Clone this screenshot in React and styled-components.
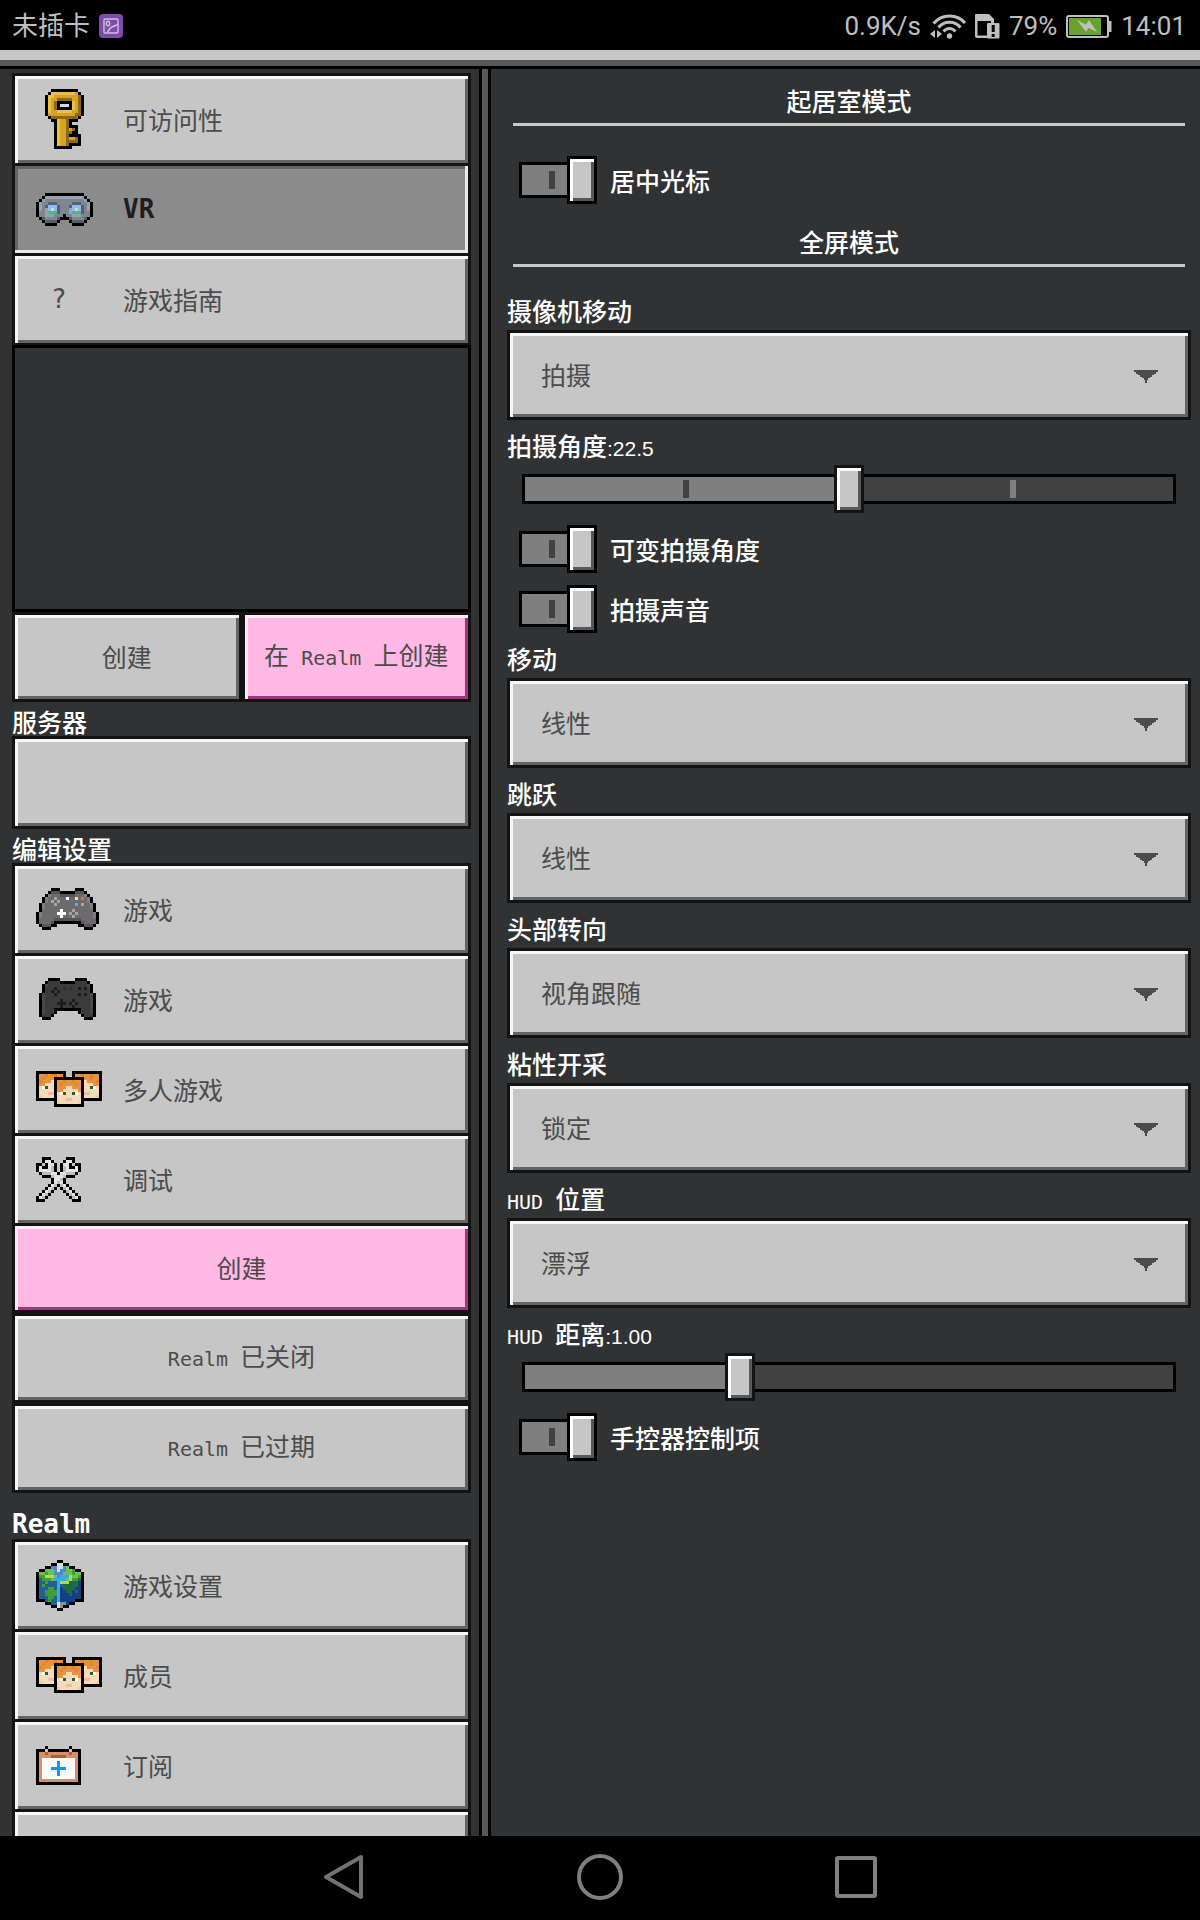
import React, { useState } from 'react';
import styled, { createGlobalStyle, css } from 'styled-components';

const GlobalStyle = createGlobalStyle`
  *, *::before, *::after { box-sizing: border-box; }
  body {
    margin: 0;
    background: #000;
    font-family: "Noto Sans CJK SC", "Noto Sans", sans-serif;
    font-size: 25px;
    line-height: 27px;
    color: #fff;
  }
  button, select, input { font: inherit; margin: 0; border-radius: 0; }
`;

/* ---------- pixel art ---------- */

const PALETTE = {
  key: { K: '#000', L: '#ecbf45', G: '#d5a326', D: '#8c6714', W: '#d8d8d8' },
  vr: { K: '#000', B: '#97a2ad', G: '#7d8792', D: '#56606b', C: '#8dbcf5', Y: '#cfe89a', T: '#55b48c' },
  pad: { K: '#000', G: '#6d6a6d', M: '#7f7d7f', D: '#565456', L: '#a5a5a5', W: '#fff', Y: '#f0e68a', R: '#e8616c', B: '#57aee0', E: '#93b877' },
  dark: { K: '#000', G: '#3b3b3b', M: '#484848', D: '#1c1c1c', S: '#303030' },
  faces: { K: '#000', O: '#e8923c', Q: '#dd8530', S: '#f4dcba', T: '#ecd0a6', W: '#fff', G: '#236224', P: '#f0b9ac' },
  tools: { K: '#000', W: '#e4e4e4', L: '#bcbcbc' },
  globe: { K: '#000', W: '#cfe3e6', B: '#4f86d8', C: '#3aa9ec', G: '#3f9e35', L: '#6cc24a', P: '#9fdc6c', U: '#235f94', N: '#123f86', D: '#1d6a44', S: '#8f8f8f' },
  calendar: { K: '#000', O: '#d3906a', D: '#a5633c', W: '#fbfbfb', B: '#1e90f5', S: '#c6c6c6' },
};

const SPRITES = {
  key: [
    '.....KKKKKKKKK',
    '....KLLLLLLLLGK',
    '...KLLGGGGGGGGDK',
    '...KLGGDDDDDGGDK',
    '...KLGDKKKKKLGDK',
    '...KLGDKWWWKLGDK',
    '...KLGDKKKKKLGDK',
    '...KLGGLLLLLGGDK',
    '...KGGGGGGGGGDDK',
    '....KDDDDDDDDDK',
    '.....KKLGGDKKK',
    '......KLGGDK',
    '......KLGGDKKK',
    '......KLGGDGDK',
    '......KLGGDDKK',
    '......KLGGDKKKK',
    '......KLGGDGGDK',
    '......KLGGDDDDK',
    '......KLGGDKKKK',
    '......KKKKKK',
  ],
  vr: [
    '...KKKKKKKKKKKKK',
    '..KBBBBBBBBBBBBBK',
    '.KBGGGGGGGGGGGGGBK',
    'KBGGDDDGGGGGDDDGGBK',
    'KBGDCCCDGGGDCCCDGBK',
    'KBGBCYCDGGGBCYCDGBK',
    'KGGBTTTDGGGBTTTDGGK',
    'KGGBBBGGGKGGBBBGGGK',
    '.KDGGGGDKKKDGGGGDK',
    '..KDDDDK...KDDDDK',
    '...KKKK.....KKKK',
  ],
  pad: [
    '.....KKK.....KKK',
    '....KDDDKKKKKDDDK',
    '...KMGGGDDDDDGGGMK',
    '..KMGGLGGGWGGYGRGMK',
    '..KMGLGLGGGGGGGGGMK',
    '.KMGGGLGGGGGGBGEGGMK',
    '.KMGGGGGGGGGGGGGGGMK',
    '.KGGGGGGWGGGLGGGGGGK',
    'KMGGGGGWWWGLGLGGGGGMK',
    'KMGGGGGGWGGGLGGGGGGMK',
    'KGGGGGDDDDDDDDDGGGGGK',
    'KGGGGDKKKKKKKKKDGGGGK',
    '.KDDDKK.......KKDDDK',
    '..KKK...........KKK',
  ],
  dark: [
    '....KKKK.....KKKK',
    '...KGGGGKKKKKGGGGK',
    '..KMGGGGGGGGGGGGGMK',
    '..KGGGDGGSGSGGDGDGK',
    '..KGGDGDGGGGGGGGGGK',
    '.KMGGGDGGGGGGGDGDGMK',
    '.KMGGGGGGGGGGGGGGGMK',
    '.KMGGGGGDGGGDGGGGGMK',
    '.KMGGGGDDDGDGDGGGGMK',
    '.KMGGGGGDGGGDGGGGGMK',
    '.KMGGGKKKKKKKKKGGGMK',
    '.KMGGGK.......KGGGMK',
    '.KGGGK.........KGGGK',
    '..KKK...........KKK',
  ],
  faces: [
    'KKKKKKKKKK..KKKKKKKKKK',
    'KOOQOOQOOK..KOOQOOQOOK',
    'KOQOOOKKKKKKKKKKOOQOOK',
    'KQOOOSKOOQOOQOOKSOOOQK',
    'KOOSSSKOQOOOOQOKSSSOOK',
    'KSWGSSKOOOSSOOOKSSGWSK',
    'KSSSSSKOOSSSSSOKSSSSSK',
    'KSSSPPKSWGSSGWSKPPSSSK',
    'KTSSSSKSSSSSSSSKSSSSTK',
    'KKKKKKKSSSPPSSSKKKKKKK',
    '......KTSSSSSSTK',
    '......KKKKKKKKKK',
  ],
  tools: [
    '..KKK.....KKK',
    '..KWWK...KWWK',
    'KK.KWWK.KWWK.KK',
    'KWKKWLK.KLWKKWK',
    'KWWWWLK.KLWWWWK',
    '.KLLLWWKWWLLLK',
    '..KKKLWWWLKKK',
    '.....KWWLK',
    '.....KWLWK',
    '....KWLKLWK',
    '...KWLK.KLWK',
    '..KWLK...KLWK',
    '.KWLK.....KLWK',
    'KWLK.......KLWK',
    'KKK.........KKK',
  ],
  globe: [
    '.......KK',
    '.....KKWWKK',
    '...KKBBWWBLKK',
    '.KKLLLBWBBLLGKK',
    'KLLGLLBBBLLLGLLK',
    'KGGPPPLBCCCPLLGK',
    'KUGGGLCCCCLPGGDK',
    'KUUGUUUCPPPDDDNK',
    'KUGUUUUCUDDDDDNK',
    'KUUUGGUCNDDDDNNK',
    'KUUGGGGCNNDDNDNK',
    'KUUGGGGCNNNDNNNK',
    'KUUUGGUCNNNNNNNK',
    'KKKUGUUCNNNNNKKK',
    '...KKUUWSSNKK',
    '.....KKWSKK',
    '.......KK',
  ],
  calendar: [
    '...K.......K',
    'KKKSKKKKKKKSKKK',
    'KOODOOOOOOODOOK',
    'KOOOODDDDDOOOOK',
    'KOWWWWWWWWWWWOK',
    'KOWWWWWBWWWWWOK',
    'KOWWWWWBWWWWWOK',
    'KOWWWBBBBBWWWOK',
    'KOWWWWWBWWWWWOK',
    'KOWWWWWBWWWWWOK',
    'KOWWWWWWWWWWWOK',
    'KOOOOOOOOOOOOOK',
    'KKKKKKKKKKKKKKK',
  ],
};

function Sprite({ name }) {
  const rows = SPRITES[name];
  const cols = Math.max(...rows.map((r) => r.length));
  return (
    <svg width={cols * 3} height={rows.length * 3} viewBox={`0 0 ${cols} ${rows.length}`} shapeRendering="crispEdges" aria-hidden="true">
      {rows.flatMap((row, y) =>
        [...row].map((c, x) =>
          c === '.' ? null : <rect key={`${x}-${y}`} x={x} y={y} width="1" height="1" fill={PALETTE[name][c]} />
        )
      )}
    </svg>
  );
}

/* ---------- shell ---------- */

const Screen = styled.div`
  display: flex;
  flex-direction: column;
  height: 100vh;
  overflow: hidden;
  background: #313233;
`;

const StatusBar = styled.header`
  flex: none;
  display: flex;
  align-items: center;
  justify-content: space-between;
  height: 50px;
  padding: 2px 14px 0 12px;
  background: #000;
  color: #bfbfbf;
  font-family: Roboto, "Noto Sans CJK SC", sans-serif;
  font-size: 26px;
  font-weight: 400;
`;

const StatusGroup = styled.div`
  display: flex;
  align-items: center;
  gap: 9px;
  svg { display: block; }
`;

const TitleStrip = styled.div`
  flex: none;
  height: 19px;
  border-top: 10px solid #c6c6c6;
  border-bottom: 3px solid #000;
  background: #58585a;
`;

const Panels = styled.main`
  flex: 1;
  min-height: 0;
  display: grid;
  grid-template-columns: minmax(0, 491fr) minmax(0, 709fr);
`;

const Sidebar = styled.nav`
  min-height: 0;
  overflow: hidden;
  padding: 4px 17px 0 12px;
  border-right: 3px solid #000;
  box-shadow: inset -6px 0 #58585a, inset -9px 0 #000;
  display: flex;
  flex-direction: column;
`;

const Content = styled.section`
  display: flex;
  flex-direction: column;
  min-height: 0;
  overflow: hidden;
  padding: 0 9px 0 16px;
`;

const NavBar = styled.footer`
  flex: none;
  display: flex;
  justify-content: center;
  gap: 16%;
  height: 84px;
  padding-bottom: 2px;
  background: #000;
`;

const NavKey = styled.button`
  display: grid;
  place-items: center;
  width: 64px;
  padding: 0;
  border: 0;
  background: none;
`;

/* ---------- shared controls ---------- */

const raised = css`
  border: 3px solid #131314;
  background: #c6c6c6;
  color: #4c4c4c;
  box-shadow: inset 3px 3px #f7f7f7, inset -3px -3px #656465;
`;

const Latin = styled.span`
  font-family: "DejaVu Sans Mono", monospace;
  font-size: 20px;
  font-weight: 400;
  white-space: pre;
`;

const Digits = styled.span`
  font-family: "Liberation Sans", sans-serif;
  font-size: 21px;
  font-weight: 400;
`;

const PixelTitle = styled.span`
  font-family: "DejaVu Sans Mono", monospace;
  font-size: 26px;
  font-weight: ${(p) => (p.$plain ? 400 : 700)};
`;

/* ---------- sidebar ---------- */

const List = styled.div`
  flex: none;
  display: flex;
  flex-direction: column;
`;

const ListItem = styled.button`
  ${raised}
  flex: none;
  display: flex;
  align-items: center;
  height: 93px;
  padding: 0 21px 1px;
  text-align: left;
  & + & { margin-top: -3px; }
  ${(p) => p.$pressed && css`
    background: #8b8b8b;
    color: #1e1e1f;
    box-shadow: inset -3px -3px #e9eaea, inset 3px 3px #656465;
  `}
`;

const IconSlot = styled.span`
  flex: none;
  display: flex;
  width: 87px;
  padding-left: ${(p) => (p.$indent ? 15 : 0)}px;
`;

const EmptyBox = styled.div`
  flex: none;
  height: 267px;
  margin-top: -1px;
  border: 3px solid #000;
`;

const ActionRow = styled.div`
  flex: none;
  display: grid;
  grid-template-columns: 1fr 1fr;
`;

const Action = styled.button`
  ${raised}
  height: 90px;
  padding: 0 0 2px;
  white-space: nowrap;
  ${(p) => p.$pink && css`
    background: #ffb9e4;
    box-shadow: inset 3px 3px #ffe9f7, inset -3px -3px #aa3080;
  `}
  ${ListItem} + & { margin-top: -3px; }
`;

const SideLabel = styled.h2`
  flex: none;
  margin: 0;
  height: ${(p) => (p.$tall ? 46 : 34)}px;
  padding-top: ${(p) => (p.$tall ? 16 : 6)}px;
  font-size: 25px;
  font-weight: 500;
`;

const ServerBox = styled.button`
  ${raised}
  flex: none;
  height: 93px;
`;

/* ---------- content ---------- */

const SectionTitle = styled.h1`
  flex: none;
  height: 63px;
  margin: 0 6px 18px;
  padding-top: 24px;
  border-bottom: 3px solid #c9c9c9;
  font-size: 25px;
  font-weight: 500;
  text-align: center;
  &:first-child { height: 57px; padding-top: 18px; }
`;

const FieldLabel = styled.label`
  flex: none;
  height: 45px;
  padding-top: 12px;
  font-weight: 500;
`;

const SelectWrap = styled.div`
  flex: none;
  position: relative;
  svg {
    position: absolute;
    right: 33px;
    top: 40px;
    pointer-events: none;
  }
`;

const Select = styled.select`
  ${raised}
  display: block;
  appearance: none;
  width: 100%;
  height: 90px;
  padding: 0 60px 2px 31px;
`;

const thumb = css`
  border: 3px solid #131314;
  background: #c6c6c6;
  box-shadow: inset 3px 3px #fff, inset -3px -3px #58585a;
`;

const fill = (c) => `linear-gradient(${c}, ${c})`;

const Slider = styled.input`
  appearance: none;
  flex: none;
  display: block;
  width: 100%;
  height: 48px;
  background:
    ${(p) => p.$ticks && css`
      ${fill('#414141')} calc(25% + 6px) 50% / 6px 18px no-repeat,
      ${fill('#7f7f7f')} calc(75% - 6px) 50% / 6px 18px no-repeat,
    `}
    ${fill('#7f7f7f')} 18px 12px / calc((100% - 36px) * var(--level)) 24px no-repeat,
    ${fill('#414141')} center / calc(100% - 36px) 24px no-repeat,
    ${fill('#000')} center / calc(100% - 30px) 30px no-repeat;
  &::-webkit-slider-thumb {
    appearance: none;
    width: 30px;
    height: 48px;
    ${thumb}
  }
`;

const ToggleRow = styled.label`
  flex: none;
  display: flex;
  align-items: center;
  gap: 13px;
  height: 48px;
  margin: 12px 12px 0;
  font-weight: 500;
`;

const ToggleInput = styled.input`
  appearance: none;
  display: flex;
  align-items: center;
  width: 78px;
  height: 48px;
  &::before {
    content: "";
    width: 51px;
    height: 36px;
    border: 3px solid #000;
    background: ${fill('#414141')} 27px 50% / 6px 18px no-repeat #7f7f7f;
  }
  &::after {
    content: "";
    width: 30px;
    height: 48px;
    margin-left: -3px;
    ${thumb}
    border-color: #000;
  }
`;

function Toggle({ label }) {
  return (
    <ToggleRow>
      <ToggleInput type="checkbox" defaultChecked />
      {label}
    </ToggleRow>
  );
}

function SelectField({ id, label, value }) {
  return (
    <>
      <FieldLabel htmlFor={id}>{label}</FieldLabel>
      <SelectWrap>
        <Select id={id} defaultValue={value}>
          <option>{value}</option>
        </Select>
        <svg width="24" height="13" viewBox="0 0 24 13" shapeRendering="crispEdges" aria-hidden="true">
          <path fill="#4c4c4c" d="M0 0H24V2H22V4H20V5H18V7H16V8H14V10H13V13H11V10H10V8H8V7H6V5H4V4H2V2H0Z" />
        </svg>
      </SelectWrap>
    </>
  );
}

function SliderField({ id, label, max, step, initial, digits, ticks }) {
  const [value, setValue] = useState(initial);
  return (
    <>
      <FieldLabel htmlFor={id}>
        {label}
        <Digits>:{value.toFixed(digits)}</Digits>
      </FieldLabel>
      <Slider
        id={id}
        type="range"
        min="0"
        max={max}
        step={step}
        value={value}
        $ticks={ticks}
        style={{ '--level': value / max }}
        onChange={(e) => setValue(Number(e.target.value))}
      />
    </>
  );
}

function Item({ icon, label, pressed }) {
  return (
    <ListItem type="button" $pressed={pressed}>
      <IconSlot $indent={icon === 'question'}>
        {icon === 'question' ? <PixelTitle $plain>?</PixelTitle> : icon && <Sprite name={icon} />}
      </IconSlot>
      {label}
    </ListItem>
  );
}

export default function App() {
  return (
    <>
      <GlobalStyle />
      <Screen>
        <StatusBar>
          <StatusGroup>
            <span lang="zh-CN">未插卡</span>
            <svg width="24" height="24" viewBox="0 0 24 24" fill="none" stroke="#cfc0dc" strokeWidth="1.4" aria-hidden="true">
              <rect width="24" height="24" rx="4" fill="#7d4bab" stroke="none" />
              <rect x="5" y="5" width="14" height="14" rx="1" />
              <ellipse cx="9" cy="9.500" rx="1.700" ry="2.200" />
              <path d="M8.500 18.500C10 14 13 13 14 12.500C16 12 17 11 19 10.500" />
            </svg>
          </StatusGroup>
          <StatusGroup>
            <span>0.9K/s</span>
            <svg width="36" height="25" viewBox="0 0 36 25" fill="none" stroke="#bfbfbf" strokeWidth="3" aria-hidden="true">
              <path d="M3.500 9.500C12 -0.500 27 -0.500 35 9" />
              <path d="M8.500 13.500C14 6.500 25 6.500 30.500 13.500" />
              <path d="M13.500 17.500C17 13.500 22 13.500 25.500 17.500" />
              <circle cx="19.500" cy="22" r="2.700" fill="#bfbfbf" stroke="none" />
              <path d="M5 16V24L0 20ZM7 16V24L12 20Z" fill="#bfbfbf" stroke="none" />
            </svg>
            <svg width="25" height="25" viewBox="0 0 25 25" aria-hidden="true">
              <path fill="#bfbfbf" fillRule="evenodd" d="M1 0H14L19 5V9H16V7H2.500V21.500H12V24H2Q0 24 0 22V1Q0 0 1 0Z" />
              <rect x="12" y="9" width="12.500" height="15.500" rx="1" fill="#bfbfbf" />
              <path stroke="#000" strokeWidth="3" d="M18.200 11V18M18.200 20V23" />
            </svg>
            <span>79%</span>
            <svg width="46" height="23" viewBox="0 0 46 23" aria-hidden="true">
              <rect x="1" y="1" width="41" height="21" rx="2" fill="none" stroke="#bfbfbf" strokeWidth="2" />
              <rect x="3" y="3" width="32" height="17" fill="#68a329" />
              <path d="M43 6H45.500V17H43Z" fill="#bfbfbf" />
              <path d="M11 5L20 9.500L23 5L31 17L22.500 13L20 17Z" fill="#bfbfbf" />
            </svg>
            <span>14:01</span>
          </StatusGroup>
        </StatusBar>
        <TitleStrip />
        <Panels lang="zh-CN">
          <Sidebar>
            <List>
              <Item icon="key" label="可访问性" />
              <Item icon="vr" label={<PixelTitle>VR</PixelTitle>} pressed />
              <Item icon="question" label="游戏指南" />
            </List>
            <EmptyBox />
            <ActionRow>
              <Action type="button">创建</Action>
              <Action type="button" $pink>在<Latin> Realm </Latin>上创建</Action>
            </ActionRow>
            <SideLabel>服务器</SideLabel>
            <ServerBox type="button" aria-label="服务器" />
            <SideLabel>编辑设置</SideLabel>
            <List>
              <Item icon="pad" label="游戏" />
              <Item icon="dark" label="游戏" />
              <Item icon="faces" label="多人游戏" />
              <Item icon="tools" label="调试" />
              <Action type="button" $pink>创建</Action>
              <Action type="button"><Latin>Realm </Latin>已关闭</Action>
              <Action type="button"><Latin>Realm </Latin>已过期</Action>
            </List>
            <SideLabel $tall><PixelTitle>Realm</PixelTitle></SideLabel>
            <List>
              <Item icon="globe" label="游戏设置" />
              <Item icon="faces" label="成员" />
              <Item icon="calendar" label="订阅" />
              <Item />
            </List>
          </Sidebar>
          <Content>
            <SectionTitle>起居室模式</SectionTitle>
            <Toggle label="居中光标" />
            <SectionTitle>全屏模式</SectionTitle>
            <SelectField id="camera" label="摄像机移动" value="拍摄" />
            <SliderField id="angle" label="拍摄角度" max={45} step={0.5} initial={22.5} digits={1} ticks />
            <Toggle label="可变拍摄角度" />
            <Toggle label="拍摄声音" />
            <SelectField id="move" label="移动" value="线性" />
            <SelectField id="jump" label="跳跃" value="线性" />
            <SelectField id="turn" label="头部转向" value="视角跟随" />
            <SelectField id="mining" label="粘性开采" value="锁定" />
            <SelectField id="hud" label={<><Latin>HUD </Latin>位置</>} value="漂浮" />
            <SliderField id="distance" label={<><Latin>HUD </Latin>距离</>} max={3} step={0.01} initial={1} digits={2} />
            <Toggle label="手控器控制项" />
          </Content>
        </Panels>
        <NavBar>
          <NavKey type="button" aria-label="返回">
            <svg width="42" height="46" viewBox="0 0 42 46" fill="none" stroke="#727272" strokeWidth="4" strokeLinejoin="round" aria-hidden="true">
              <path d="M38 3V43L3 23Z" />
            </svg>
          </NavKey>
          <NavKey type="button" aria-label="主页">
            <svg width="46" height="46" viewBox="0 0 46 46" fill="none" stroke="#808080" strokeWidth="4" aria-hidden="true">
              <circle cx="23" cy="23" r="21" />
            </svg>
          </NavKey>
          <NavKey type="button" aria-label="最近">
            <svg width="42" height="42" viewBox="0 0 42 42" fill="none" stroke="#808080" strokeWidth="4" aria-hidden="true">
              <rect x="2" y="2" width="38" height="38" rx="1" />
            </svg>
          </NavKey>
        </NavBar>
      </Screen>
    </>
  );
}
